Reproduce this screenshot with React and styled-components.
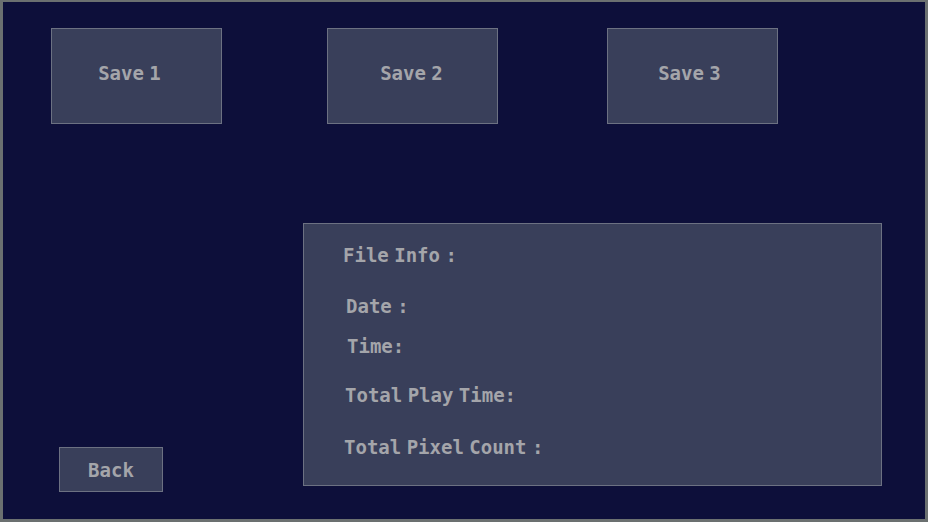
import React from 'react';
import styled, { createGlobalStyle } from 'styled-components';

const GlobalStyle = createGlobalStyle`
    html, body {
        margin: 0;
        padding: 0;
        background: #0d0f3a;
    }
    * {
        box-sizing: border-box;
    }
`;

const Frame = styled.div`
    width: 928px;
    height: 522px;
    background: #0d0f3a;
    border: 3px solid #6b7070;
    border-top-width: 2px;
    display: flex;
    flex-direction: column;
    font-family: "DejaVu Sans Mono", "Liberation Mono", monospace;
    font-weight: 700;
    font-size: 19px;
    word-spacing: -6px;
    color: #a4a5aa;
    overflow: hidden;
`;

const SaveRow = styled.div`
    display: flex;
    margin-top: 26px;
    padding-left: 48px;
    gap: 105px;
`;

const Tile = styled.button`
    font: inherit;
    color: inherit;
    word-spacing: inherit;
    background: #393f5a;
    border: 1px solid #6c7182;
    border-radius: 0;
    display: flex;
    align-items: center;
    justify-content: center;
    padding: 0;
    cursor: pointer;
`;

const SaveButton = styled(Tile)`
    width: 171px;
    height: 96px;
    padding-bottom: 6px;
    padding-right: ${props => props.$textShift || 0}px;
    margin-left: ${props => props.$shift || 0}px;
`;

const BackButton = styled(Tile)`
    width: 104px;
    height: 45px;
    margin-left: 56px;
    margin-top: 224px;
    align-self: flex-start;
`;

const Lower = styled.div`
    display: flex;
    margin-top: 99px;
`;

const InfoPanel = styled.div`
    width: 579px;
    height: 263px;
    margin-left: 140px;
    background: #393f5a;
    border: 1px solid #6c7182;
    padding: 21px 0 0 39px;
    display: flex;
    flex-direction: column;
`;

const InfoLine = styled.div`
    line-height: 20px;
    height: 20px;
    white-space: pre;
    margin-top: ${props => props.$top || 0}px;
    padding-left: ${props => props.$indent || 0}px;
`;

const lines = [
    { text: 'File Info :', top: 0, indent: 0 },
    { text: 'Date :', top: 31, indent: 3 },
    { text: 'Time:', top: 20, indent: 4 },
    { text: 'Total Play Time:', top: 29, indent: 2 },
    { text: 'Total Pixel Count :', top: 32, indent: 1 },
];

export default function App() {
    return (
        <>
            <GlobalStyle />
            <Frame>
                <SaveRow>
                    <SaveButton $textShift={14}>Save 1</SaveButton>
                    <SaveButton $textShift={2}>Save 2</SaveButton>
                    <SaveButton $shift={4} $textShift={6}>Save 3</SaveButton>
                </SaveRow>
                <Lower>
                    <BackButton>Back</BackButton>
                    <InfoPanel>
                        {lines.map(line => (
                            <InfoLine key={line.text} $top={line.top} $indent={line.indent}>
                                {line.text}
                            </InfoLine>
                        ))}
                    </InfoPanel>
                </Lower>
            </Frame>
        </>
    );
}
